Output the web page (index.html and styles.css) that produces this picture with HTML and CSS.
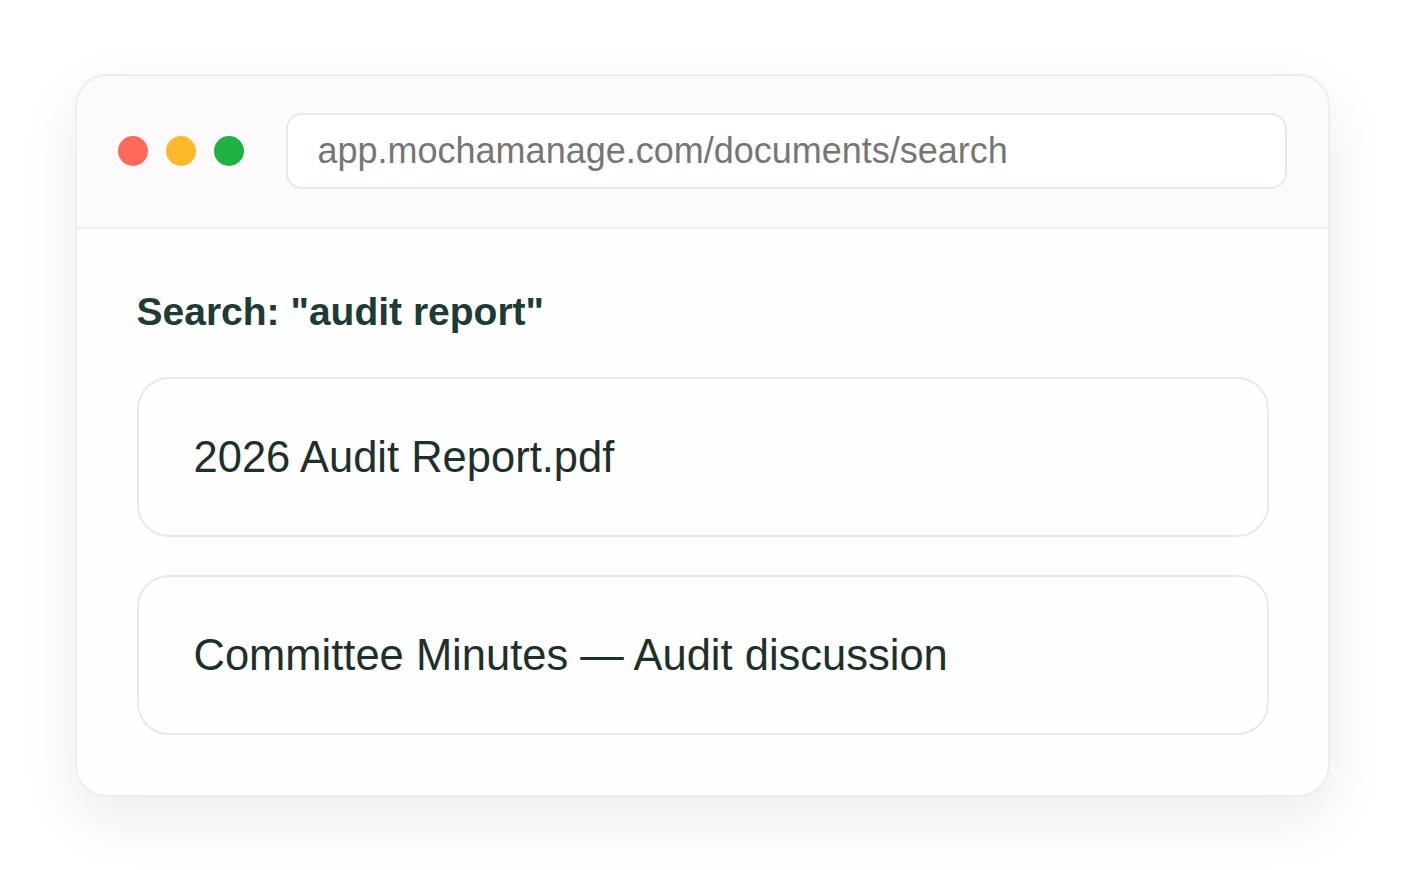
FILE: index.html
```html
<!DOCTYPE html>
<html lang="en">
<head>
  <meta charset="UTF-8">
  <title>Document search</title>
  <link rel="stylesheet" href="styles.css">
</head>
<body>

  <div class="window">
    <!-- barre du navigateur -->
    <div class="window-bar">
      <div class="dots">
        <span class="dot dot-red"></span>
        <span class="dot dot-yellow"></span>
        <span class="dot dot-green"></span>
      </div>
      <div class="url-bar">app.mochamanage.com/documents/search</div>
    </div>

    <div class="window-body">
      <h1 class="search-title">Search: "audit report"</h1>
      <div class="result">2026 Audit Report.pdf</div>
      <div class="result">Committee Minutes — Audit discussion</div>
    </div>
  </div>

</body>
</html>
```

FILE: styles.css
```css
html, body {
  margin: 0;
  height: 100%;
}

body {
  font-family: 'Liberation Sans', Arial, sans-serif;
  background: #ffffff;
  display: flex;
  align-items: center;
  justify-content: center;
}

.window {
  width: 1255px;
  box-sizing: border-box;
  background: #fefefe;
  border: 2px solid #efedf0;
  border-radius: 32px;
  overflow: hidden;
  box-shadow: 0 22px 60px rgba(0, 0, 0, 0.08);
}

.window-bar {
  display: flex;
  align-items: center;
  gap: 42px;
  padding: 37px 41px 38px 41px;
  background: #fcfafc;
  border-bottom: 2px solid #eeecef;
}

.dots {
  display: flex;
  gap: 18px;
}

.dot {
  width: 30px;
  height: 30px;
  border-radius: 50%;
}

.dot-red { background: #fe6b5a; }
.dot-yellow { background: #fdb92b; }
.dot-green { background: #1fb142; }

.url-bar {
  flex: 1;
  height: 72px;
  display: flex;
  align-items: center;
  padding: 0 30px;
  background: #ffffff;
  border: 2px solid #e9e7ea;
  border-radius: 16px;
  font-size: 36px;
  color: #767676;
}

.window-body {
  padding: 60px 59px 60px 60px;
}

.search-title {
  margin: 0 0 43px 0;
  font-size: 39px;
  line-height: 45px;
  font-weight: bold;
  color: #1e3b35;
}

.result {
  padding: 53px 55px;
  margin-bottom: 38px;
  background: #fefefe;
  border: 2px solid #e9e8ea;
  border-radius: 32px;
  font-size: 43.5px;
  line-height: 50px;
  color: #1e302c;
}

.result:last-child {
  margin-bottom: 0;
}
```
